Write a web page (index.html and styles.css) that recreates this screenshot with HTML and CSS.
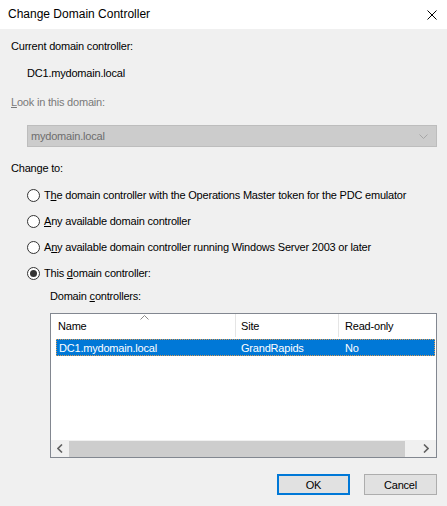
FILE: index.html
```html
<!DOCTYPE html>
<html>
<head>
<meta charset="utf-8">
<title>Change Domain Controller</title>
<link rel="stylesheet" href="styles.css">
</head>
<body>
<div class="titlebar">
  <span class="title">Change Domain Controller</span>
  <svg class="close" width="10" height="10" viewBox="0 0 10 10"><path d="M0.5 0.5 L9.5 9.5 M9.5 0.5 L0.5 9.5" stroke="#000" stroke-width="1" fill="none"/></svg>
</div>
<div class="dialog">
  <div class="line label-current">Current domain controller:</div>
  <div class="line value">DC1.mydomain.local</div>
  <div class="line look"><u>L</u>ook in this domain:</div>
  <div class="combo">
    <span class="combo-text">mydomain.local</span>
    <svg class="combo-arrow" width="9" height="5" viewBox="0 0 9 5"><path d="M0.5 0.5 L4.5 4.5 L8.5 0.5" stroke="#a6a6a6" fill="none"/></svg>
  </div>
  <div class="line change-to">Change to:</div>
  <div class="radios">
    <div class="radio-row"><span class="radio"></span><span>T<u>h</u>e domain controller with the Operations Master token for the PDC emulator</span></div>
    <div class="radio-row"><span class="radio"></span><span><u>A</u>ny available domain controller</span></div>
    <div class="radio-row"><span class="radio"></span><span>A<u>n</u>y available domain controller running Windows Server 2003 or later</span></div>
    <div class="radio-row"><span class="radio checked"></span><span>This <u>d</u>omain controller:</span></div>
  </div>
  <div class="line dc-label">Domain <u>c</u>ontrollers:</div>
  <div class="list">
    <div class="list-header">
      <div class="hcell c1">Name<svg class="sort" width="9" height="5" viewBox="0 0 9 5"><path d="M0.5 4.5 L4.5 0.5 L8.5 4.5" stroke="#8a8a8a" fill="none"/></svg></div>
      <div class="hcell c2">Site</div>
      <div class="hcell c3">Read-only</div>
    </div>
    <div class="list-body">
      <div class="row selected">
        <div class="cell c1">DC1.mydomain.local</div>
        <div class="cell c2">GrandRapids</div>
        <div class="cell c3">No</div>
      </div>
    </div>
    <div class="hscroll">
      <div class="sb-btn"><svg width="6" height="9" viewBox="0 0 6 9"><path d="M5 0.5 L1 4.5 L5 8.5" stroke="#606060" stroke-width="1.6" fill="none"/></svg></div>
      <div class="sb-thumb"></div>
      <div class="sb-btn right"><svg width="6" height="9" viewBox="0 0 6 9"><path d="M1 0.5 L5 4.5 L1 8.5" stroke="#606060" stroke-width="1.6" fill="none"/></svg></div>
    </div>
  </div>
  <div class="buttons">
    <button class="btn default">OK</button>
    <button class="btn">Cancel</button>
  </div>
</div>
</body>
</html>
```
FILE: styles.css
```css
html, body {
  margin: 0;
  padding: 0;
}
body {
  width: 447px;
  height: 506px;
  overflow: hidden;
  background: #f0f0f0;
  font-family: "Liberation Sans", Arial, sans-serif;
  font-size: 11px;
  letter-spacing: -0.2px;
  color: #000;
}
u {
  text-decoration: underline;
  text-underline-offset: 1px;
}
.titlebar {
  height: 29px;
  background: #fff;
  display: flex;
  align-items: center;
  justify-content: space-between;
  padding: 0 10px 0 8px;
  box-sizing: border-box;
  letter-spacing: 0;
}
.title {
  font-size: 12px;
  margin-top: -1px;
}
.close {
  display: block;
}
.dialog {
  padding: 0 10px 0 11px;
}
.line {
  line-height: 13px;
  white-space: nowrap;
}
.label-current {
  margin-top: 11px;
}
.value {
  margin-top: 14px;
  padding-left: 16px;
}
.look {
  margin-top: 16px;
  color: #7a7a7a;
}
.combo {
  margin: 16px 0 0 16px;
  height: 22px;
  box-sizing: border-box;
  border: 1px solid #bdbdbd;
  background: #cccccc;
  display: flex;
  align-items: center;
  justify-content: space-between;
  padding: 0 8px 0 3px;
  color: #6d6d6d;
}
.combo-arrow {
  display: block;
}
.change-to {
  margin-top: 15px;
}
.radios {
  margin-top: 7px;
}
.radio-row {
  height: 26px;
  display: flex;
  align-items: center;
  gap: 4px;
  padding-left: 16px;
  white-space: nowrap;
}
.radio {
  width: 13px;
  height: 13px;
  box-sizing: border-box;
  border: 1px solid #333;
  border-radius: 50%;
  background: #fff;
  display: flex;
  align-items: center;
  justify-content: center;
  flex: none;
}
.radio.checked::after {
  content: "";
  width: 7px;
  height: 7px;
  border-radius: 50%;
  background: #333;
}
.dc-label {
  margin-top: 4px;
  padding-left: 39px;
}
.list {
  margin: 10px 0 0 39px;
  height: 145px;
  box-sizing: border-box;
  border: 1px solid #828790;
  background: #fff;
  display: flex;
  flex-direction: column;
}
.list-header {
  height: 23px;
  display: flex;
  flex: none;
}
.hcell {
  display: flex;
  align-items: center;
  box-sizing: border-box;
  white-space: nowrap;
}
.hcell.c1 {
  width: 184px;
  padding-left: 7px;
  position: relative;
}
.hcell.c2 {
  width: 103px;
  border-left: 1px solid #e5e5e5;
  padding-left: 5px;
}
.hcell.c3 {
  flex: 1;
  border-left: 1px solid #e5e5e5;
  padding-left: 6px;
}
.sort {
  position: absolute;
  top: 1px;
  left: 89px;
}
.list-body {
  flex: 1;
  padding: 2px 1px 0 5px;
}
.row {
  height: 17px;
  display: flex;
  box-sizing: border-box;
}
.row.selected {
  background: #0078d7;
  color: #fff;
  border: 1px dotted #d89a55;
}
.cell {
  display: flex;
  align-items: center;
  white-space: nowrap;
  box-sizing: border-box;
}
.cell.c1 {
  width: 178px;
  padding-left: 2px;
}
.cell.c2 {
  width: 104px;
  padding-left: 6px;
}
.cell.c3 {
  flex: 1;
  padding-left: 6px;
}
.hscroll {
  height: 17px;
  display: flex;
  flex: none;
  background: #f0f0f0;
}
.sb-btn {
  width: 17px;
  display: flex;
  align-items: center;
  justify-content: center;
}
.sb-btn.right {
  width: 31px;
  justify-content: flex-end;
  padding-right: 7px;
  box-sizing: border-box;
}
.sb-thumb {
  flex: 1;
  background: #cdcdcd;
  margin: 1px 0 0 1px;
}
.buttons {
  margin-top: 16px;
  display: flex;
  justify-content: flex-end;
  gap: 14px;
}
.btn {
  width: 73px;
  height: 21px;
  box-sizing: border-box;
  border: 1px solid #adadad;
  background: #e1e1e1;
  font-family: "Liberation Sans", Arial, sans-serif;
  font-size: 11px;
  letter-spacing: -0.2px;
  color: #000;
  padding: 0;
  margin: 0;
}
.btn.default {
  border: 2px solid #0078d7;
}
```
